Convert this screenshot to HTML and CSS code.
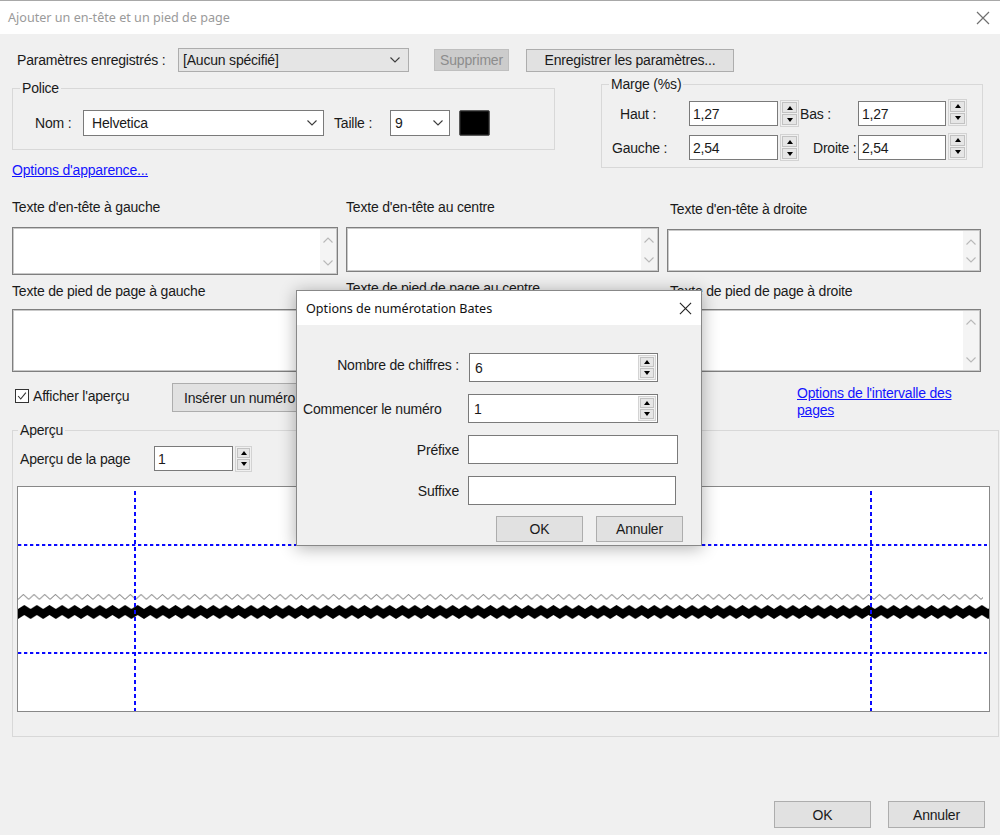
FILE: index.html
```html
<!DOCTYPE html>
<html lang="fr">
<head>
<meta charset="utf-8">
<title>Ajouter un en-tête et un pied de page</title>
<link rel="stylesheet" href="styles.css">
</head>
<body>
<div class="window">
  <div class="titlebar">
    <span class="title">Ajouter un en-tête et un pied de page</span>
    <svg class="close" viewBox="0 0 14 14"><path d="M1 1L13 13M13 1L1 13"/></svg>
  </div>
  <div class="content">
    <div class="saved-row">
      <span class="saved-label">Paramètres enregistrés :</span>
      <div class="combo combo-saved"><span>[Aucun spécifié]</span><svg class="chev" viewBox="0 0 10 6"><path d="M0.5 0.5L5 5L9.5 0.5"/></svg></div>
      <button class="btn btn-disabled">Supprimer</button>
      <button class="btn btn-save">Enregistrer les paramètres...</button>
    </div>

    <div class="settings-row">
      <div class="font-col">
        <fieldset class="group group-font">
          <legend>Police</legend>
          <div class="font-fields">
            <span class="lbl-nom">Nom :</span>
            <div class="combo combo-name"><span>Helvetica</span><svg class="chev" viewBox="0 0 10 6"><path d="M0.5 0.5L5 5L9.5 0.5"/></svg></div>
            <span class="lbl-taille">Taille :</span>
            <div class="combo combo-size"><span>9</span><svg class="chev" viewBox="0 0 10 6"><path d="M0.5 0.5L5 5L9.5 0.5"/></svg></div>
            <span class="swatch"></span>
          </div>
        </fieldset>
        <a class="link link-appearance" href="#">Options d'apparence...</a>
      </div>
      <fieldset class="group group-margin">
        <legend>Marge (%s)</legend>
        <div class="margin-grid">
          <span class="mlbl mlbl-haut">Haut :</span>
          <div class="field">1,27</div>
          <div class="spin"><b class="up"></b><b class="down"></b></div>
          <span class="mlbl mlbl-bas">Bas :</span>
          <div class="field">1,27</div>
          <div class="spin spin-hi"><b class="up"></b><b class="down"></b></div>
          <span class="mlbl mlbl-gauche">Gauche :</span>
          <div class="field">2,54</div>
          <div class="spin"><b class="up"></b><b class="down"></b></div>
          <span class="mlbl mlbl-droite">Droite :</span>
          <div class="field">2,54</div>
          <div class="spin spin-hi"><b class="up"></b><b class="down"></b></div>
        </div>
      </fieldset>
    </div>

    <div class="text-grid">
      <div class="tcell">
        <span class="tlabel">Texte d'en-tête à gauche</span>
        <div class="ta ta-head"><div class="ta-scroll"><svg viewBox="0 0 10 6"><path d="M0.5 5.5L5 1L9.5 5.5"/></svg><svg viewBox="0 0 10 6"><path d="M0.5 0.5L5 5L9.5 0.5"/></svg></div></div>
      </div>
      <div class="tcell">
        <span class="tlabel">Texte d'en-tête au centre</span>
        <div class="ta ta-head-c"><div class="ta-scroll"><svg viewBox="0 0 10 6"><path d="M0.5 5.5L5 1L9.5 5.5"/></svg><svg viewBox="0 0 10 6"><path d="M0.5 0.5L5 5L9.5 0.5"/></svg></div></div>
      </div>
      <div class="tcell tcell-right">
        <span class="tlabel">Texte d'en-tête à droite</span>
        <div class="ta ta-head-r"><div class="ta-scroll"><svg viewBox="0 0 10 6"><path d="M0.5 5.5L5 1L9.5 5.5"/></svg><svg viewBox="0 0 10 6"><path d="M0.5 0.5L5 5L9.5 0.5"/></svg></div></div>
      </div>
      <div class="tcell">
        <span class="tlabel">Texte de pied de page à gauche</span>
        <div class="ta ta-foot"><div class="ta-scroll"><svg viewBox="0 0 10 6"><path d="M0.5 5.5L5 1L9.5 5.5"/></svg><svg viewBox="0 0 10 6"><path d="M0.5 0.5L5 5L9.5 0.5"/></svg></div></div>
      </div>
      <div class="tcell tcell-center-foot">
        <span class="tlabel">Texte de pied de page au centre</span>
        <div class="ta ta-foot"><div class="ta-scroll"><svg viewBox="0 0 10 6"><path d="M0.5 5.5L5 1L9.5 5.5"/></svg><svg viewBox="0 0 10 6"><path d="M0.5 0.5L5 5L9.5 0.5"/></svg></div></div>
      </div>
      <div class="tcell tcell-right-foot">
        <span class="tlabel">Texte de pied de page à droite</span>
        <div class="ta ta-foot"><div class="ta-scroll"><svg viewBox="0 0 10 6"><path d="M0.5 5.5L5 1L9.5 5.5"/></svg><svg viewBox="0 0 10 6"><path d="M0.5 0.5L5 5L9.5 0.5"/></svg></div></div>
      </div>
    </div>

    <div class="action-row">
      <span class="checkbox"><svg viewBox="0 0 14 14"><path d="M2.5 7L5.5 10.5L11.5 3"/></svg></span>
      <span class="check-label">Afficher l'aperçu</span>
      <button class="btn btn-insert">Insérer un numéro Bates...</button>
      <a class="link link-range" href="#">Options de l'intervalle des pages</a>
    </div>

    <fieldset class="group group-preview">
      <legend>Aperçu</legend>
      <div class="preview-row">
        <span class="plabel">Aperçu de la page</span>
        <div class="field field-page">1</div>
        <div class="spin spin-page"><b class="up"></b><b class="down"></b></div>
      </div>
      <div class="canvas">
        <svg width="971" height="224" viewBox="0 0 971 224">
          <defs>
            <pattern id="zz-gray" x="0" y="107" width="10.7" height="7" patternUnits="userSpaceOnUse">
              <path d="M0 5.5L5.35 0.5L10.7 5.5" fill="none" stroke="#8c8c8c" stroke-width="1"/>
            </pattern>
            <pattern id="zz-black" x="0" y="118" width="12.6" height="14" patternUnits="userSpaceOnUse">
              <polygon points="0,4 6.3,0 12.6,4 12.6,14 6.3,10 0,14" fill="#000"/>
            </pattern>
          </defs>
          <rect x="0" y="107" width="965" height="7" fill="url(#zz-gray)"/>
          <rect x="0" y="118" width="971" height="14" fill="url(#zz-black)"/>
          <path class="guide" d="M0 58H969M0 166H969" stroke-dasharray="3.3 2.7"/>
          <path class="guide" d="M117 4V224M853 4V224" stroke-dasharray="4 3"/>
        </svg>
      </div>
    </fieldset>

    <div class="footer-buttons">
      <button class="btn btn-foot">OK</button>
      <button class="btn btn-foot">Annuler</button>
    </div>
  </div>
</div>

<div class="modal">
  <div class="modal-title">
    <span>Options de numérotation Bates</span>
    <svg class="modal-close" viewBox="0 0 14 14"><path d="M1 1L13 13M13 1L1 13"/></svg>
  </div>
  <div class="modal-body">
    <div class="modal-grid">
      <span class="mlabel mlabel-top">Nombre de chiffres :</span>
      <div class="mfield mfield-spin mfield-first"><span>6</span><div class="spin spin-in"><b class="up"></b><b class="down"></b></div></div>
      <span class="mlabel mlabel-left">Commencer le numéro</span>
      <div class="mfield mfield-spin"><span>1</span><div class="spin spin-in"><b class="up"></b><b class="down"></b></div></div>
      <span class="mlabel">Préfixe</span>
      <div class="mfield mfield-pre"></div>
      <span class="mlabel">Suffixe</span>
      <div class="mfield mfield-suf"></div>
    </div>
    <div class="modal-buttons">
      <button class="btn btn-modal">OK</button>
      <button class="btn btn-modal">Annuler</button>
    </div>
  </div>
</div>
</body>
</html>
```

FILE: styles.css
```css
* { box-sizing: border-box; }

html, body {
  margin: 0;
  padding: 0;
}

body {
  width: 1000px;
  height: 835px;
  overflow: hidden;
  background: #f0f0f0;
  font-family: "Liberation Sans", Arial, sans-serif;
  font-size: 14px;
  letter-spacing: -0.2px;
  color: #1a1a1a;
  position: relative;
}

.window {
  border-top: 1px solid #a8a8a8;
}

.titlebar {
  height: 33px;
  background: #ffffff;
  display: flex;
  align-items: center;
  justify-content: space-between;
  padding: 0 10px 0 8px;
}

.title {
  font-family: "Noto Sans", sans-serif;
  font-size: 12.6px;
  letter-spacing: 0;
  color: #9a9a9a;
}

.close {
  width: 14px;
  height: 14px;
  fill: none;
  stroke: #707070;
  stroke-width: 1.2;
}

.content {
  padding: 0 12px;
}

/* Row 1 */
.saved-row {
  margin-top: 14px;
  height: 24px;
  display: flex;
  align-items: center;
}

.saved-label {
  width: 166px;
  padding-left: 5px;
  white-space: nowrap;
}

.combo {
  height: 24px;
  display: flex;
  align-items: center;
  justify-content: space-between;
  padding: 0 8px 0 4px;
  border: 1px solid #7a7a7a;
  background: #ffffff;
}

.chev {
  width: 10px;
  height: 6px;
  fill: none;
  stroke: #3c3c3c;
  stroke-width: 1.1;
}

.combo-saved {
  width: 231px;
  background: #e5e5e5;
  border-color: #adadad;
}

.btn {
  font: inherit;
  letter-spacing: inherit;
  color: #1a1a1a;
  background: #e1e1e1;
  border: 1px solid #adadad;
  padding: 0;
  margin: 0;
  text-align: center;
}

.btn-disabled {
  margin-left: 25px;
  width: 75px;
  height: 22px;
  background: #cccccc;
  border-color: #bfbfbf;
  color: #8d8d8d;
}

.btn-save {
  margin-left: 17px;
  width: 208px;
  height: 23px;
}

/* Row 2 */
.settings-row {
  margin-top: 8px;
  display: flex;
  align-items: flex-start;
}

.group {
  margin: 0;
  padding: 0;
  border: 1px solid #d8d8d8;
  min-width: 0;
}

.group legend {
  padding: 0 2px;
  line-height: 16px;
  height: 16px;
}

.group-font {
  width: 543px;
}

.group-font legend {
  margin-left: 7px;
}

.font-fields {
  display: flex;
  align-items: center;
  padding: 14px 0 13px 22px;
}

.lbl-nom {
  width: 48px;
}

.combo-name {
  width: 241px;
  height: 26px;
  padding-left: 8px;
  padding-right: 6px;
}

.lbl-taille {
  margin-left: 10px;
  width: 56px;
}

.combo-size {
  width: 60px;
  height: 26px;
  padding-right: 6px;
}

.swatch {
  margin-left: 9px;
  width: 31px;
  height: 26px;
  background: #000;
  border: 1px solid #5a5a5a;
  border-radius: 2px;
  box-shadow: inset 0 0 0 1px #1a1a1a;
}

.link {
  color: #1414ff;
  text-decoration: underline;
  line-height: 17px;
}

.link-appearance {
  display: block;
  width: fit-content;
  margin-top: 12px;
  line-height: 16px;
}

.group-margin {
  margin-left: 46px;
  margin-top: -4px;
  width: 382px;
}

.group-margin legend {
  margin-left: 7px;
}

.margin-grid {
  display: grid;
  grid-template-columns: 87px 89px 21px 59px 88px 21px;
  grid-template-rows: 25px 25px;
  row-gap: 9px;
  align-items: center;
  padding: 9px 0 7px 0;
}

.mlbl {
  white-space: nowrap;
}

.mlbl-haut { padding-left: 18px; }
.mlbl-gauche { padding-left: 10px; }
.mlbl-bas { padding-left: 1px; }
.mlbl-droite { padding-left: 14px; }

.field {
  height: 25px;
  border: 1px solid #7a7a7a;
  background: #ffffff;
  padding-left: 3px;
  display: flex;
  align-items: center;
}

.spin {
  justify-self: end;
  width: 19px;
  height: 27px;
  border: 1px solid #d3d3d3;
  padding: 1px;
  display: flex;
  flex-direction: column;
  gap: 1px;
  background: #f0f0f0;
}

.spin-hi {
  margin-top: -3px;
}

.spin b {
  flex: 1;
  display: flex;
  align-items: center;
  justify-content: center;
  background: #e6e6e6;
  border: 1px solid #c2c2c2;
}

.spin b::after {
  content: "";
  width: 0;
  height: 0;
  border-left: 3.5px solid transparent;
  border-right: 3.5px solid transparent;
}

.spin .up::after {
  border-bottom: 4px solid #000;
}

.spin .down::after {
  border-top: 4px solid #000;
}

/* Text areas */
.text-grid {
  margin-top: 21px;
  display: grid;
  grid-template-columns: 326px 313px 314px;
  column-gap: 8px;
  row-gap: 8px;
  align-items: start;
}

.tcell {
  display: flex;
  flex-direction: column;
}

.tlabel {
  line-height: 16px;
  white-space: nowrap;
}

.tcell-right {
  margin-top: 2px;
}

.tcell-right .tlabel,
.tcell-right-foot .tlabel {
  padding-left: 3px;
}

.tcell-center-foot .tlabel {
  margin-top: -3px;
  margin-bottom: 3px;
}

.ta {
  margin-top: 12px;
  background: #ffffff;
  border: 1px solid #7f7f7f;
  box-shadow: inset 0 0 0 1px #c9c9c9;
  display: flex;
  justify-content: flex-end;
  padding: 1px;
}

.ta-head { height: 48px; }
.ta-head-c { height: 45px; }
.ta-head-r { height: 43px; }
.ta-foot { height: 63px; margin-top: 10px; }

.ta-scroll {
  width: 16px;
  background: #f4f4f4;
  display: flex;
  flex-direction: column;
  align-items: center;
  justify-content: space-between;
  padding: 8px 0 7px;
}

.ta-scroll svg {
  width: 10px;
  height: 6px;
  fill: none;
  stroke: #b8b8b8;
  stroke-width: 1.1;
}

/* Action row */
.action-row {
  margin-top: 11px;
  height: 29px;
  display: flex;
  align-items: flex-start;
}

.checkbox {
  margin-left: 3px;
  margin-top: 6px;
  width: 14px;
  height: 14px;
  border: 1px solid #333;
  background: #ffffff;
  display: flex;
}

.checkbox svg {
  width: 12px;
  height: 12px;
  fill: none;
  stroke: #333;
  stroke-width: 1.3;
}

.check-label {
  margin-left: 4px;
  margin-top: 5px;
  width: 139px;
  line-height: 16px;
}

.btn-insert {
  width: 172px;
  height: 29px;
  text-align: left;
  padding-left: 11px;
  white-space: nowrap;
}

.link-range {
  margin-left: auto;
  margin-right: 21px;
  margin-top: 2px;
  width: 170px;
}

/* Preview */
.group-preview {
  margin-top: 10px;
  width: 987px;
  padding: 0 0 24px 0;
}

.group-preview legend {
  margin-left: 5px;
}

.preview-row {
  display: flex;
  align-items: center;
  height: 25px;
  margin-top: 8px;
  padding-left: 7px;
}

.plabel {
  width: 134px;
}

.field-page {
  width: 79px;
}

.spin-page {
  margin-left: 2px;
  width: 17px;
  height: 26px;
}

.canvas {
  margin-top: 15px;
  margin-left: 4px;
  width: 973px;
  height: 226px;
  border: 1px solid #888888;
  background: #ffffff;
}

.canvas svg {
  display: block;
}

.guide {
  fill: none;
  stroke: #0a0aff;
  stroke-width: 2;
}

.footer-buttons {
  margin-top: 64px;
  display: flex;
  justify-content: flex-end;
  gap: 17px;
  padding-right: 3px;
}

.btn-foot {
  width: 97px;
  height: 27px;
}

/* Modal */
.modal {
  position: absolute;
  left: 296px;
  top: 290px;
  width: 406px;
  height: 256px;
  border: 1px solid #888888;
  background: #f0f0f0;
  box-shadow: 0 2px 16px rgba(0, 0, 0, 0.32);
}

.modal-title {
  height: 34px;
  background: #ffffff;
  display: flex;
  align-items: center;
  justify-content: space-between;
  padding: 0 9px 0 9px;
  font-family: "Noto Sans", sans-serif;
  font-size: 12.6px;
  letter-spacing: 0;
  color: #111;
}

.modal-close {
  width: 13px;
  height: 13px;
  fill: none;
  stroke: #222;
  stroke-width: 1.2;
}

.modal-body {
  padding: 28px 18px 0 6px;
}

.modal-grid {
  display: grid;
  grid-template-columns: 156px auto;
  grid-auto-rows: 29px;
  column-gap: 9px;
  row-gap: 12px;
  align-items: center;
}

.mlabel {
  text-align: right;
  white-space: nowrap;
}

.mlabel-top {
  margin-top: -5px;
}

.mlabel-left {
  text-align: left;
}

.mfield {
  height: 29px;
  border: 1px solid #7a7a7a;
  background: #ffffff;
  display: flex;
  align-items: center;
  justify-content: space-between;
  padding-left: 5px;
}

.mfield-spin {
  width: 190px;
  padding-right: 1px;
}

.mfield-first {
  margin-left: 1px;
  width: 189px;
}

.spin-in {
  width: 18px;
  height: 25px;
}

.mfield-pre {
  width: 210px;
}

.mfield-suf {
  width: 208px;
}

.modal-buttons {
  margin-top: 11px;
  display: flex;
  justify-content: flex-end;
  gap: 13px;
}

.btn-modal {
  width: 87px;
  height: 26px;
}
```
